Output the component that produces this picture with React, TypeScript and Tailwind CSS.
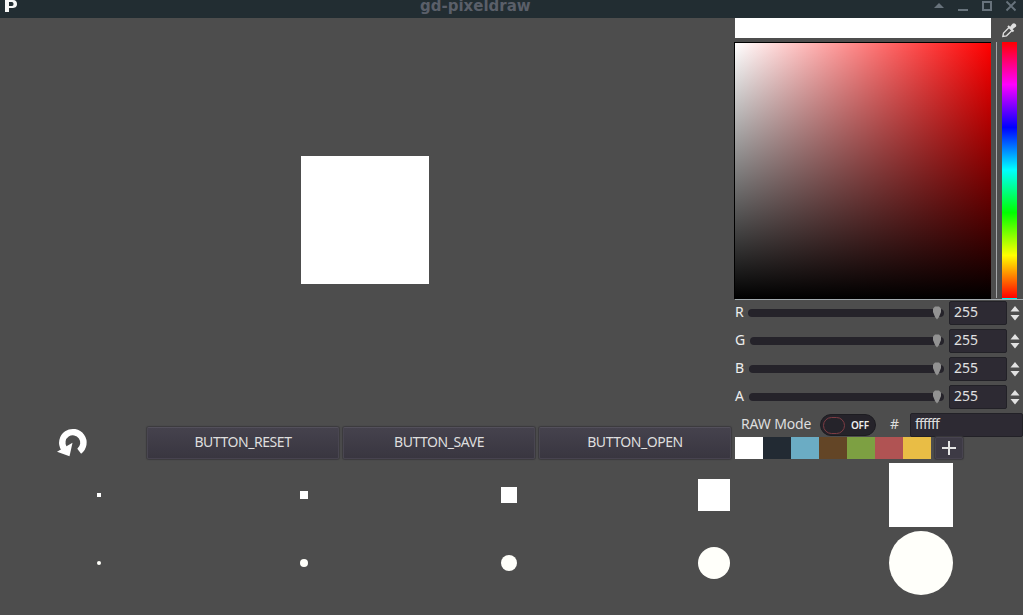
import React from 'react';

const channels = [
  { label: 'R', labelWidth: 'w-[13px]' },
  { label: 'G', labelWidth: 'w-[15px]' },
  { label: 'B', labelWidth: 'w-[14px]' },
  { label: 'A', labelWidth: 'w-[14px]' },
];

const presets = [
  'bg-white',
  'bg-[#222a33]',
  'bg-[#6bacc4]',
  'bg-[#634526]',
  'bg-[#7da042]',
  'bg-[#b05353]',
  'bg-[#e9bd45]',
];

const actions = ['BUTTON_RESET', 'BUTTON_SAVE', 'BUTTON_OPEN'];

const brushSizes = ['size-1', 'size-2', 'size-4', 'size-8', 'size-16'];

function TitleBar() {
  return (
    <header className="flex h-[18px] shrink-0 bg-[#222d32]">
      <svg className="ml-1 h-3 w-[14px]" viewBox="0 0 14 12">
        <path d="M1 0H9C12 0 13 2 13 4C13 7 11 8 8 8H5V12H1ZM5 2V6H8C10 6 10 2 8 2Z" fill="#f8f8f8" fillRule="evenodd" />
      </svg>
      <h1 className="ml-[402px] h-[12px] w-[140px] whitespace-nowrap font-['DejaVu_Sans'] text-[15px] leading-[12px] font-bold text-[#5a5f69]">
        gd-pixeldraw
      </h1>
      <svg className="ml-auto h-[18px] w-[91px]" viewBox="0 0 91 18" fill="none" stroke="#68737c" shapeRendering="crispEdges">
        <path d="M2 8L7 3L12 8Z" fill="#68737c" stroke="none" shapeRendering="auto" />
        <path d="M26 10H36" strokeWidth="2" />
        <rect x="51" y="2" width="8" height="8" strokeWidth="2" />
        <path d="M74.500 1.500L83.500 10.500M83.500 1.500L74.500 10.500" strokeWidth="1.800" shapeRendering="auto" />
      </svg>
    </header>
  );
}

function UndoIcon() {
  return (
    <svg className="mt-[4px] ml-[57px] h-[29px] w-[31px]" viewBox="0 0 31 29">
      <path d="M7 20.500A10.600 10.600 0 1 1 22.200 23.200" fill="none" stroke="white" strokeWidth="6.400" />
      <path d="M0 23.800L15.500 14.800L12.500 28.200Z" fill="white" />
    </svg>
  );
}

function ActionBar() {
  return (
    <div className="flex h-[37px] items-start">
      <div className="w-[147px] shrink-0">
        <UndoIcon />
      </div>
      <div className="mt-[3px] flex gap-[4px]">
        {actions.map((label) => (
          <button
            key={label}
            className="h-[32px] w-[192px] rounded-[2px] border border-t-[#53505b] border-x-[#494651] border-b-[#47434f] bg-linear-to-b from-[#45424d] to-[#393640] pb-[2px] text-center text-[14px] leading-[20px] tracking-[-0.45px] text-[#dedede] shadow-[0_0_1px_1px_#3b3a3e]"
          >
            {label}
          </button>
        ))}
      </div>
    </div>
  );
}

function Eyedropper() {
  return (
    <svg className="ml-[11px] mt-[5px] h-[15px] w-[15px]" viewBox="0 0 15 15">
      <path d="M7 4.500L1.500 10L.8 13.500L4.500 12.800L10 7.500" fill="none" stroke="#e0e0e0" strokeWidth="1.300" />
      <path d="M6 3L11.500 8.500" stroke="#e0e0e0" strokeWidth="2" />
      <path d="M7.500 4.500L10.500 .8Q12-.2 13.500 1Q14.800 2.500 13.800 3.800L9.500 7Z" fill="#e0e0e0" />
    </svg>
  );
}

function ColorField() {
  return (
    <div className="flex h-[256px]">
      <div className="h-[257px] w-[257px] shrink-0 border-t border-l border-black bg-[linear-gradient(to_bottom,transparent,black),linear-gradient(to_right,white,red)]" />
      <div className="ml-[5px] w-px bg-[#a6a8aa]" />
      <div className="ml-[5px] w-[15px] bg-[linear-gradient(to_bottom,#f00,#f0f_16.67%,#00f_33.33%,#0ff_50%,#0f0_66.67%,#ff0_83.33%,#f00)]" />
    </div>
  );
}

function Channel({ label, labelWidth }: { label: string; labelWidth: string }) {
  return (
    <div className="flex h-[24px] items-center pl-px">
      <span className={`${labelWidth} mt-[-2px] shrink-0 text-[14px] leading-[20px] text-[#eeeeee]`}>{label}</span>
      <div className="relative h-[8px] flex-1 rounded-full bg-[#25232a]">
        <svg className="absolute right-[2px] top-[-3px] h-[14px] w-[10px]" viewBox="0 0 10 14">
          <path d="M3 .5H7L9 2.500V6L7 11L5 13.500L3 11L1 6V2.500Z" fill="#929292" />
        </svg>
      </div>
      <div className="ml-[5px] h-[24px] w-[58px] rounded-[2px] border border-[#222127] bg-[#2d2a33] pl-[4px] text-[14px] leading-[20px] text-[#e0e0e0]">
        255
      </div>
      <svg className="h-[16px] w-[16px]" viewBox="0 0 16 16" fill="#e2e2e2">
        <path d="M3.500 6.500L8 1L12.500 6.500ZM3.500 10H12.500L8 15.500Z" />
      </svg>
    </div>
  );
}

function ModeRow() {
  return (
    <div className="flex h-[24px] items-center pl-[7px] text-[14px] text-[#dedede]">
      <span className="mt-[-2px] w-[79px] whitespace-nowrap leading-[20px] tracking-[-0.15px]">RAW Mode</span>
      <div className="flex h-[22px] w-[56px] items-center rounded-full border border-[#1d1c21] bg-[#25232a] pl-[2px]">
        <i className="h-[17px] w-[22px] rounded-full border border-[#7d3c43]" />
        <b className="ml-[6px] text-[10px] leading-none font-semibold tracking-[-0.3px] text-[#eeeeee]">OFF</b>
      </div>
      <span className="mt-[-2px] ml-[14px] w-[20px] leading-[20px]">#</span>
      <div className="h-[24px] flex-1 rounded-[2px] border border-[#222127] bg-[#2d2a33] pl-[4px] leading-[20px] tracking-[-0.8px]">ffffff</div>
    </div>
  );
}

function ColorPicker() {
  return (
    <aside className="w-[289px] shrink-0">
      <div className="flex h-[24px]">
        <div className="ml-px h-[20px] w-[256px] bg-white" />
        <Eyedropper />
      </div>
      <ColorField />
      <div className="flex h-[3px] flex-col">
        <div className="ml-[268px] h-px w-[15px] bg-[#00eeee]" />
        <div className="ml-px h-px bg-[#a2aaae]" />
      </div>
      <div className="flex flex-col gap-[4px]">
        {channels.map((c) => (
          <Channel key={c.label} {...c} />
        ))}
        <ModeRow />
      </div>
      <div className="flex h-[22px] pl-px">
        {presets.map((color) => (
          <div key={color} className={`h-[22px] w-[28px] ${color}`} />
        ))}
        <button className="ml-[4px] flex h-[22px] w-[28px] items-center justify-center rounded-[2px] border border-[#47434f] bg-[#3d3a45] shadow-[0_0_1px_1px_#3b3a3e]">
          <svg className="size-[14px]" viewBox="0 0 14 14">
            <path d="M0 7H14M7 0V14" stroke="#e5e5e5" strokeWidth="2" />
          </svg>
        </button>
      </div>
    </aside>
  );
}

function BrushRow({ round }: { round?: boolean }) {
  return (
    <div className="ml-[-4px] grid h-[64px] grid-cols-[206px_204px_206px_204px_210px] place-items-center">
      {brushSizes.map((size) => (
        <div key={size} className={`${size} ${round ? 'rounded-full bg-[#fffffa]' : 'bg-white'}`} />
      ))}
    </div>
  );
}

export default function App() {
  return (
    <div className="flex h-[615px] w-[1023px] flex-col overflow-hidden bg-[#4d4d4d] font-['Noto_Sans',sans-serif]">
      <TitleBar />
      <main className="flex h-[443px] shrink-0">
        <section className="flex w-[734px] shrink-0 flex-col">
          <div className="flex h-[406px] items-center justify-center pr-[4px] pb-[2px]">
            <div className="size-[128px] bg-white" />
          </div>
          <ActionBar />
        </section>
        <ColorPicker />
      </main>
      <footer className="flex flex-col gap-[4px] pt-[2px]">
        <BrushRow />
        <BrushRow round />
      </footer>
    </div>
  );
}
